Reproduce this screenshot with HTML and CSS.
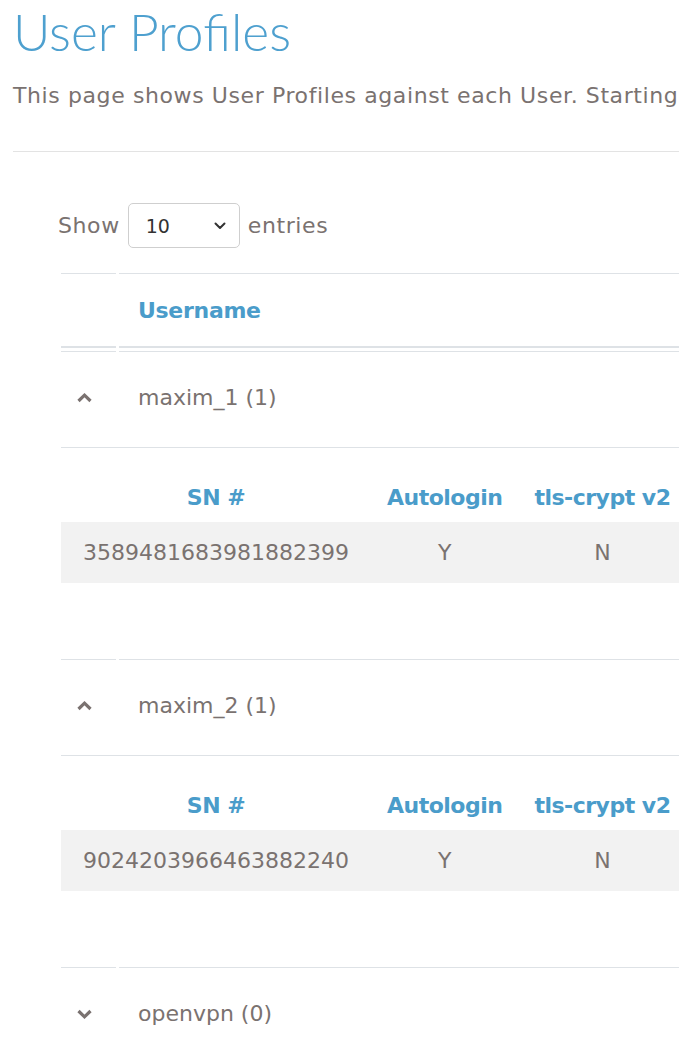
FILE: index.html
```html
<!DOCTYPE html>
<html lang="en">
<head>
<meta charset="utf-8">
<title>User Profiles</title>
<link rel="stylesheet" href="styles.css">
</head>
<body>
<main class="page">
  <h1 class="title">User Profiles</h1>
  <p class="lead">This page shows User Profiles against each User. Starting</p>
  <hr class="divider">
  <section class="panel">
    <div class="length">
      <span>Show</span>
      <div class="select">
        <span class="select-value">10</span>
        <svg class="select-caret" width="12" height="8" viewBox="0 0 12 8"><polyline points="1.5,1.5 6,6 10.5,1.5" fill="none" stroke="#333" stroke-width="2" stroke-linecap="round" stroke-linejoin="round"/></svg>
      </div>
      <span>entries</span>
    </div>
    <table class="users">
      <thead>
        <tr><th class="ctrl"></th><th class="name-col">Username</th></tr>
      </thead>
      <tbody>
        <tr class="group">
          <td class="ctrl"><svg class="chev" width="15" height="10" viewBox="0 0 15 10"><polyline points="1.5,8 7.5,2.2 13.5,8" fill="none" stroke="#7a7270" stroke-width="3.2"/></svg></td>
          <td class="name">maxim_1 (1)</td>
        </tr>
        <tr class="detail">
          <td colspan="2">
            <table class="profiles">
              <thead>
                <tr><th class="sn">SN #</th><th class="flag">Autologin</th><th class="flag">tls-crypt v2</th><th class="fill"></th></tr>
              </thead>
              <tbody>
                <tr><td class="sn">3589481683981882399</td><td class="flag">Y</td><td class="flag">N</td><td class="fill"></td></tr>
              </tbody>
            </table>
          </td>
        </tr>
        <tr class="group">
          <td class="ctrl"><svg class="chev" width="15" height="10" viewBox="0 0 15 10"><polyline points="1.5,8 7.5,2.2 13.5,8" fill="none" stroke="#7a7270" stroke-width="3.2"/></svg></td>
          <td class="name">maxim_2 (1)</td>
        </tr>
        <tr class="detail">
          <td colspan="2">
            <table class="profiles">
              <thead>
                <tr><th class="sn">SN #</th><th class="flag">Autologin</th><th class="flag">tls-crypt v2</th><th class="fill"></th></tr>
              </thead>
              <tbody>
                <tr><td class="sn">9024203966463882240</td><td class="flag">Y</td><td class="flag">N</td><td class="fill"></td></tr>
              </tbody>
            </table>
          </td>
        </tr>
        <tr class="group">
          <td class="ctrl"><svg class="chev" width="15" height="10" viewBox="0 0 15 10"><polyline points="1.5,2 7.5,7.8 13.5,2" fill="none" stroke="#7a7270" stroke-width="3.2"/></svg></td>
          <td class="name">openvpn (0)</td>
        </tr>
      </tbody>
    </table>
  </section>
</main>
</body>
</html>
```

FILE: styles.css
```css
html, body {
  margin: 0;
  padding: 0;
  background: #ffffff;
  overflow: hidden;
}

body {
  font-family: "DejaVu Sans", "Open Sans", sans-serif;
  font-size: 22px;
  color: #7a7270;
}

.page {
  width: 1100px;
  padding-left: 13px;
}

.title {
  margin: 0;
  font-family: "Lato", "Open Sans", sans-serif;
  font-weight: 300;
  font-size: 51.5px;
  line-height: 62px;
  color: #4ea0cf;
}

.lead {
  margin: 19px 0 0;
  line-height: 30px;
  letter-spacing: 0.6px;
  white-space: nowrap;
}

.divider {
  margin: 40px 0 0;
  border: 0;
  border-top: 1px solid #e3e3e3;
  height: 0;
}

.panel {
  padding-left: 45px;
  padding-top: 51px;
}

.length {
  display: flex;
  align-items: center;
  gap: 8px;
  height: 45px;
  letter-spacing: 0.6px;
}

.select {
  box-sizing: border-box;
  width: 112px;
  height: 45px;
  border: 1px solid #cfcfcf;
  border-radius: 5px;
  display: flex;
  align-items: center;
  justify-content: space-between;
  padding: 0 13px 0 17px;
  font-size: 19px;
  letter-spacing: 0;
  color: #333333;
}

.users {
  border-collapse: separate;
  border-spacing: 3px;
  width: 1000px;
  margin-top: 22px;
}

.users > thead > tr > th {
  border-top: 1px solid #dee2e6;
  border-bottom: 2px solid #dee2e6;
  padding: 24px 19px 23px;
  line-height: 25px;
  text-align: left;
  color: #4a9cca;
  font-weight: bold;
  letter-spacing: -0.3px;
}

.users .ctrl {
  width: 55px;
  box-sizing: border-box;
}

.users > thead > tr > th.ctrl {
  padding: 0;
}

.group > td {
  border-top: 1px solid #dee2e6;
  padding: 33px 19px 34px;
  line-height: 25px;
}

.group > td.ctrl {
  padding: 33px 0 34px 16px;
}

.chev {
  display: block;
}

.detail > td {
  border-top: 1px solid #dee2e6;
  padding: 0;
}

.profiles {
  border-collapse: collapse;
  width: 100%;
  margin: 25px 0 73px;
}

.profiles th,
.profiles td {
  line-height: 25px;
  text-align: center;
  white-space: nowrap;
}

.profiles th {
  padding: 12px 16px;
  color: #4a9cca;
  font-weight: bold;
  letter-spacing: -0.5px;
}

.profiles td {
  padding: 18px 16px;
  background: #f2f2f2;
}

.profiles .sn {
  padding-left: 22px;
  padding-right: 22px;
}

.profiles .fill {
  width: 100%;
  padding: 0;
}
```
